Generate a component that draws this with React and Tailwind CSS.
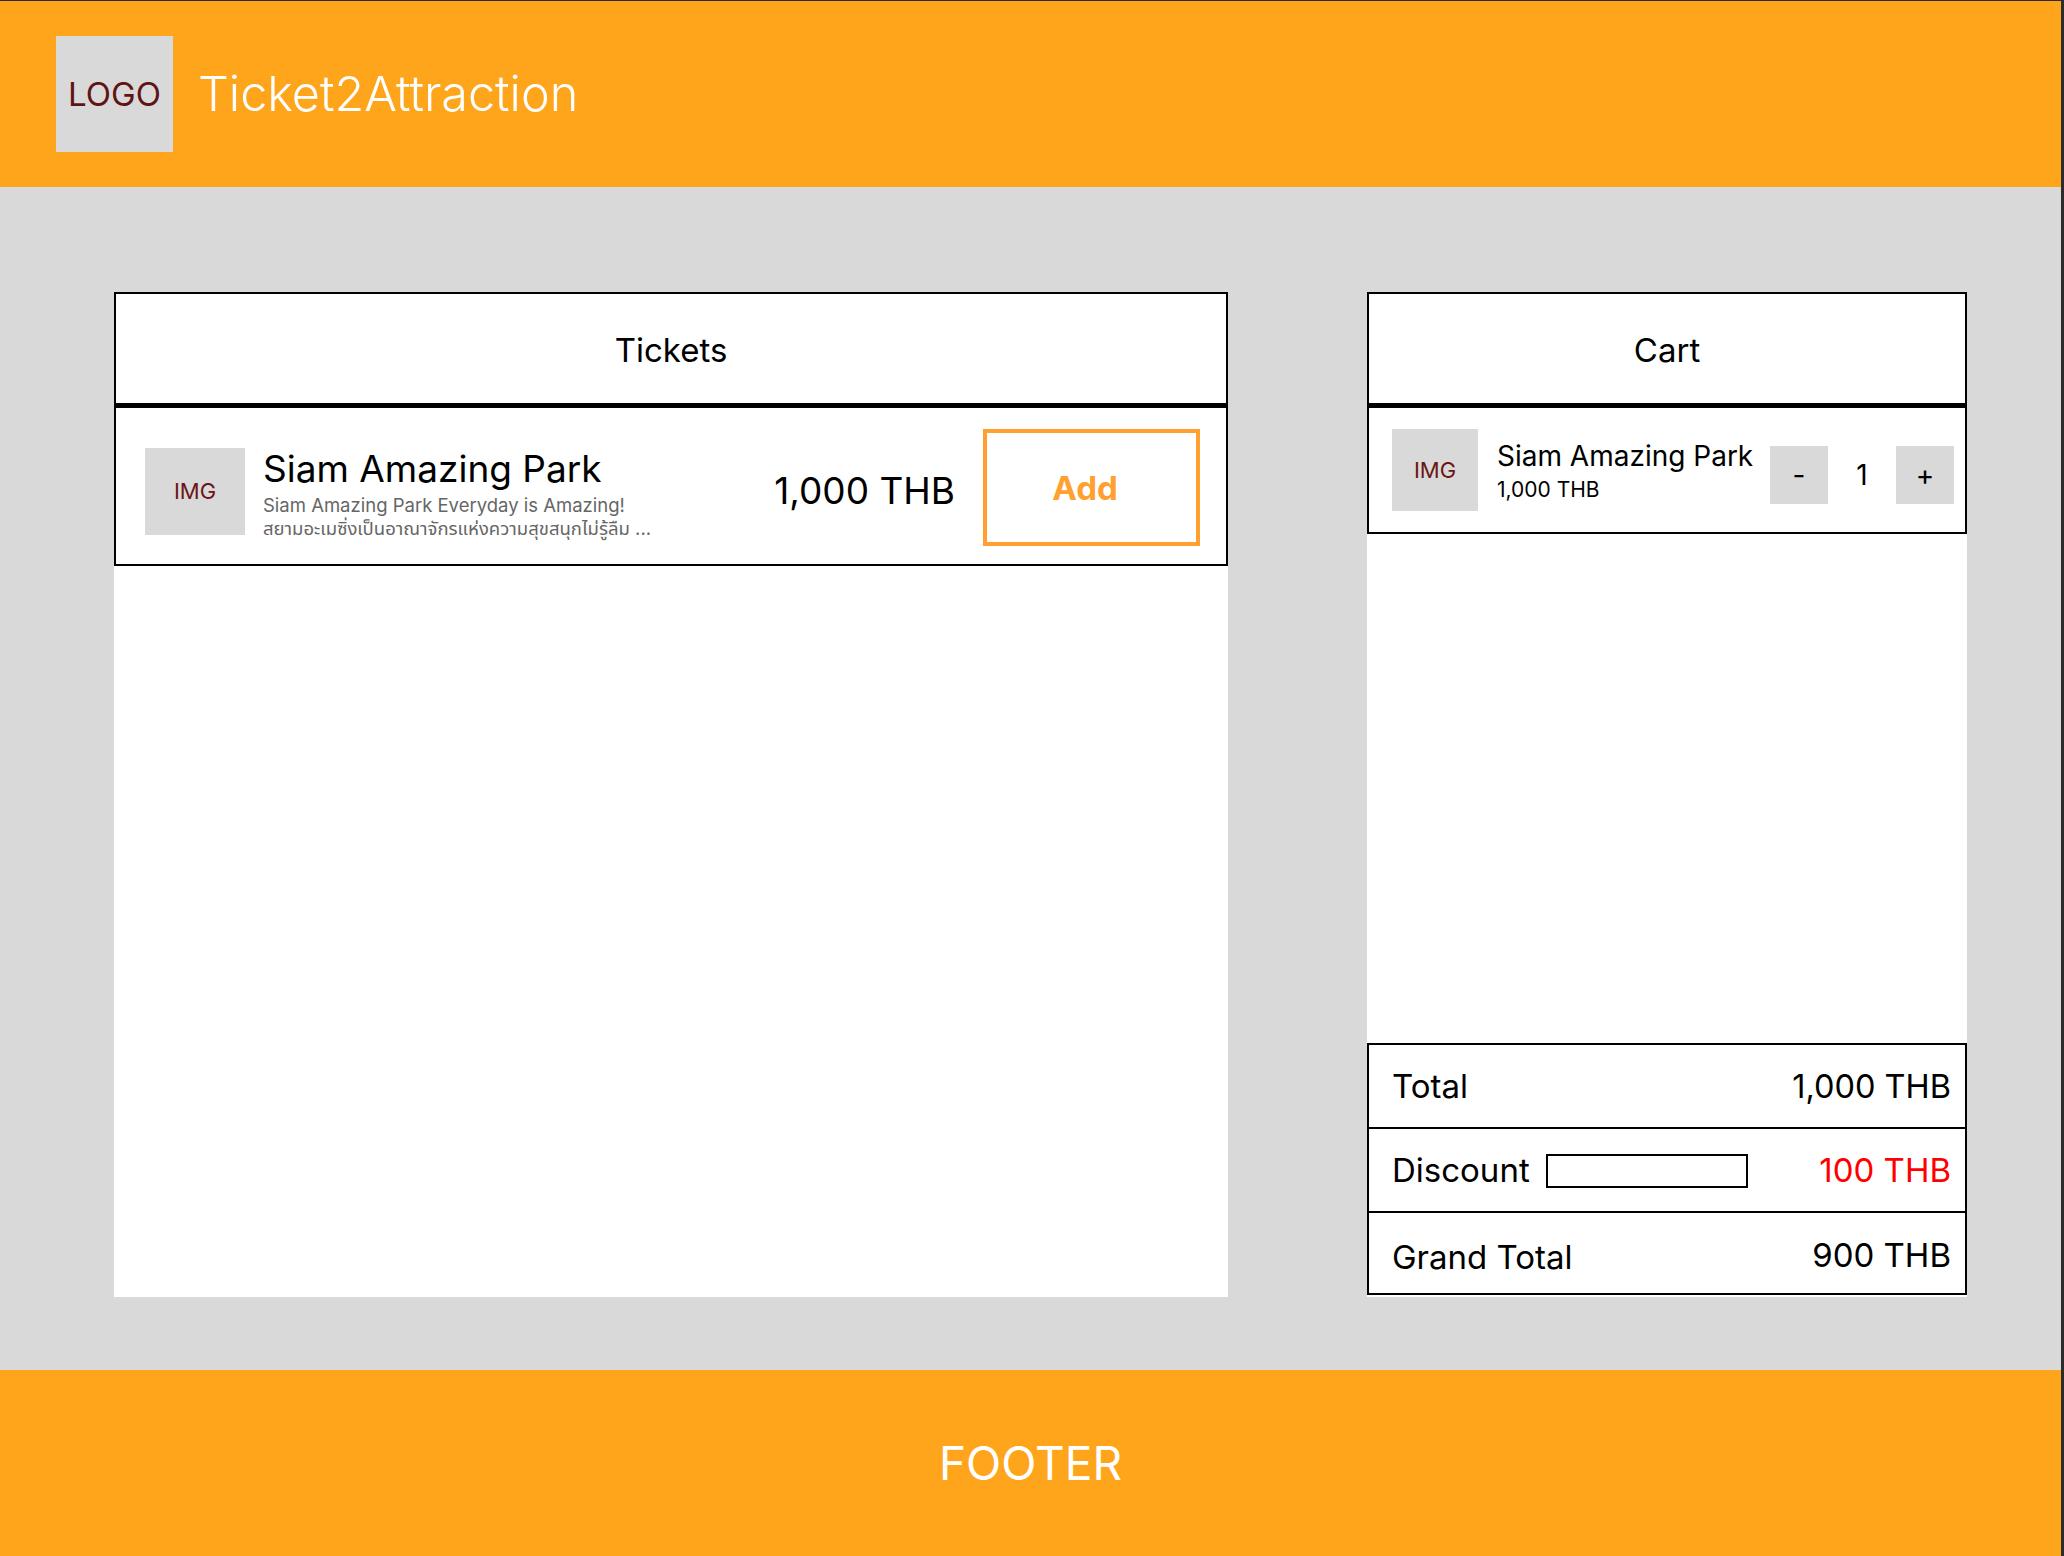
import React from "react";

const font = { fontFamily: "Inter, 'Noto Sans', 'Noto Sans Thai', sans-serif" };

export default function App() {
  return (
    <div
      className="w-[2064px] h-[1556px] flex flex-col border-t border-r-[3px] border-[#2b2b2b] bg-[#d9d9d9] overflow-hidden"
      style={font}
    >
      <header className="h-[186px] shrink-0 bg-[#ffa51c] flex items-center pl-[56px]">
        <div className="w-[117px] h-[116px] bg-[#d9d9d9] flex items-center justify-center text-[33px] text-[#5e1414] leading-none">
          LOGO
        </div>
        <div className="ml-[25px] text-[48.5px] font-light text-white leading-none">Ticket2Attraction</div>
      </header>

      <main className="flex-1 flex pt-[105px] pl-[114px] gap-[139px]">
        {/* Tickets */}
        <section className="w-[1114px] h-[1005px] bg-white flex flex-col">
          <div className="border-2 border-black">
            <div className="h-[114px] flex items-center justify-center pt-[4px] text-[33px] text-black border-b-[5px] border-black">
              Tickets
            </div>
            <div className="h-[156px] flex items-start">
              <div className="ml-[29px] mt-[40px] w-[100px] h-[87px] bg-[#d9d9d9] flex items-center justify-center text-[22px] text-[#6b1515]">
                IMG
              </div>
              <div className="ml-[18px] mt-[39px] flex-1 min-w-0">
                <div className="text-[37px] leading-[44px] text-black">Siam Amazing Park</div>
                <div className="mt-[3px] text-[18.5px] leading-[23px] text-[#666666]">
                  <div>Siam Amazing Park Everyday is Amazing!</div>
                  <div>สยามอะเมซิ่งเป็นอาณาจักรแห่งความสุขสนุกไม่รู้ลืม ...</div>
                </div>
              </div>
              <div className="mt-[61px] text-[37px] leading-[44px] text-black whitespace-nowrap">1,000 THB</div>
              <button className="ml-[28px] mr-[26px] mt-[21px] w-[217px] h-[117px] border-4 border-[#ffa030] bg-white flex items-center justify-center pr-[13px] pt-[3px] text-[33px] font-bold text-[#ffa030]">
                Add
              </button>
            </div>
          </div>
        </section>

        {/* Cart */}
        <section className="w-[600px] h-[1005px] bg-white flex flex-col">
          <div className="border-2 border-black">
            <div className="h-[114px] flex items-center justify-center pt-[4px] text-[33px] text-black border-b-[5px] border-black">
              Cart
            </div>
            <div className="h-[124px] flex items-start">
              <div className="ml-[23px] mt-[21px] w-[86px] h-[82px] bg-[#d9d9d9] flex items-center justify-center text-[22px] text-[#6b1515]">
                IMG
              </div>
              <div className="ml-[19px] mt-[31px] flex-1 min-w-0">
                <div className="text-[28px] leading-[34px] text-black whitespace-nowrap">Siam Amazing Park</div>
                <div className="mt-[5px] text-[21px] leading-[24px] text-black">1,000 THB</div>
              </div>
              <button className="mt-[38px] w-[58px] h-[58px] bg-[#d9d9d9] flex items-center justify-center text-[28px] text-black">
                -
              </button>
              <div className="mt-[38px] w-[68px] h-[58px] flex items-center justify-center text-[28px] text-black">1</div>
              <button className="mt-[38px] mr-[11px] w-[58px] h-[58px] bg-[#d9d9d9] flex items-center justify-center text-[28px] text-black">
                +
              </button>
            </div>
          </div>
          <div className="flex-1" />
          <div className="border-2 border-black mb-[2px] text-[33px] text-black">
            <div className="h-[84px] flex items-center justify-between pl-[23px] pr-[14px] pt-[2px] border-b-2 border-black">
              <span>Total</span>
              <span className="text-[32.5px]">1,000 THB</span>
            </div>
            <div className="h-[84px] flex items-center pl-[23px] pr-[14px] pt-[2px] border-b-2 border-black">
              <span>Discount</span>
              <input className="ml-[16px] w-[202px] h-[34px] border-2 border-black bg-white outline-none" />
              <span className="ml-auto text-[#ff0000]">100 THB</span>
            </div>
            <div className="h-[80px] flex items-center justify-between pl-[23px] pr-[14px] pt-[10px]">
              <span>Grand Total</span>
              <span className="mb-[5px]">900 THB</span>
            </div>
          </div>
        </section>
      </main>

      <footer className="h-[186px] shrink-0 bg-[#ffa51c] flex items-center justify-center text-[46px] text-white">
        FOOTER
      </footer>
    </div>
  );
}
